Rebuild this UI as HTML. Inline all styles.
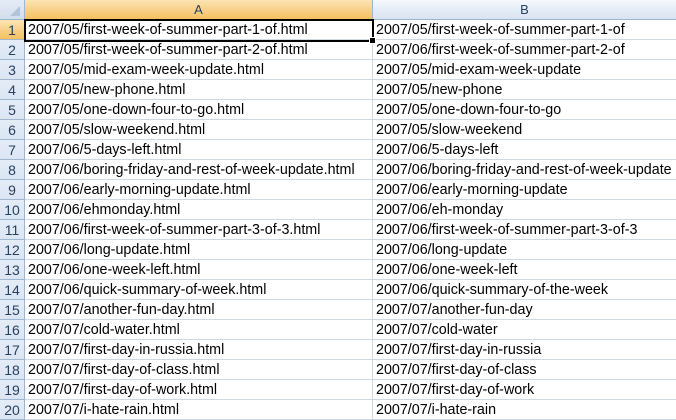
<!DOCTYPE html>
<html><head><style>
body{margin:0;width:676px;height:420px;overflow:hidden;background:#fff;font-family:"Liberation Sans",sans-serif;font-size:14.3px;color:#000}
.h{position:absolute;top:0;height:19px;border-bottom:1px solid #9eb6ce;}
.r{position:absolute;left:0;width:24px;height:19px;border-bottom:1px solid #9eb6ce;border-right:1px solid #9eb6ce;background:linear-gradient(#e4ecf7,#dbe5f3);color:#27415f;text-align:center;line-height:20px;font-size:14px}
.c{position:absolute;height:19px;line-height:21px;border-bottom:1px solid #d0d7e5;border-right:1px solid #d0d7e5;white-space:nowrap;overflow:hidden;padding-left:3px;box-sizing:content-box}
</style></head><body>
<div class="h" style="left:0;width:24px;border-right:1px solid #9eb6ce;background:linear-gradient(#e4ecf7,#d2ddec)">
<svg width="24" height="19" style="position:absolute;left:0;top:0"><polygon points="20,6 20,16 10,16" fill="#b4c4d8"/></svg></div>
<div class="h" style="left:25px;width:347px;border-right:1px solid #9eb6ce;background:linear-gradient(#fbe4b4,#f8d18a 50%,#f5c15f);border-bottom:1px solid #f29536;text-align:center;line-height:20px;color:#27415f;font-size:13px">A</div>
<div class="h" style="left:373px;width:303px;background:linear-gradient(#f6f9fc,#e4ecf7 50%,#dae4f1);text-align:center;line-height:20px;color:#27415f;font-size:13px">B</div>
<div id="g"></div>
<script>
var a=["2007/05/first-week-of-summer-part-1-of.html","2007/05/first-week-of-summer-part-2-of.html","2007/05/mid-exam-week-update.html","2007/05/new-phone.html","2007/05/one-down-four-to-go.html","2007/05/slow-weekend.html","2007/06/5-days-left.html","2007/06/boring-friday-and-rest-of-week-update.html","2007/06/early-morning-update.html","2007/06/ehmonday.html","2007/06/first-week-of-summer-part-3-of-3.html","2007/06/long-update.html","2007/06/one-week-left.html","2007/06/quick-summary-of-week.html","2007/07/another-fun-day.html","2007/07/cold-water.html","2007/07/first-day-in-russia.html","2007/07/first-day-of-class.html","2007/07/first-day-of-work.html","2007/07/i-hate-rain.html"];
var b=["2007/05/first-week-of-summer-part-1-of","2007/06/first-week-of-summer-part-2-of","2007/05/mid-exam-week-update","2007/05/new-phone","2007/05/one-down-four-to-go","2007/05/slow-weekend","2007/06/5-days-left","2007/06/boring-friday-and-rest-of-week-update","2007/06/early-morning-update","2007/06/eh-monday","2007/06/first-week-of-summer-part-3-of-3","2007/06/long-update","2007/06/one-week-left","2007/06/quick-summary-of-the-week","2007/07/another-fun-day","2007/07/cold-water","2007/07/first-day-in-russia","2007/07/first-day-of-class","2007/07/first-day-of-work","2007/07/i-hate-rain"];
var h="";
for(var i=0;i<20;i++){var y=20+i*20;
var st=i==0?"background:linear-gradient(#fbe4b4,#f8d18a 50%,#f5c15f);border-right:1px solid #f29536;":"";
h+='<div class="r" style="top:'+y+'px;'+st+'">'+(i+1)+'</div>';
h+='<div class="c" style="left:25px;top:'+y+'px;width:344px">'+a[i]+'</div>';
h+='<div class="c" style="left:373px;top:'+y+'px;width:300px">'+b[i]+'</div>';}
h+='<div style="position:absolute;left:24px;top:19px;width:346px;height:19px;border:2px solid #000"></div>';
h+='<div style="position:absolute;left:369px;top:37px;width:5px;height:5px;background:#000;border:1px solid #fff"></div>';
document.getElementById("g").innerHTML=h;
</script>
</body></html>
